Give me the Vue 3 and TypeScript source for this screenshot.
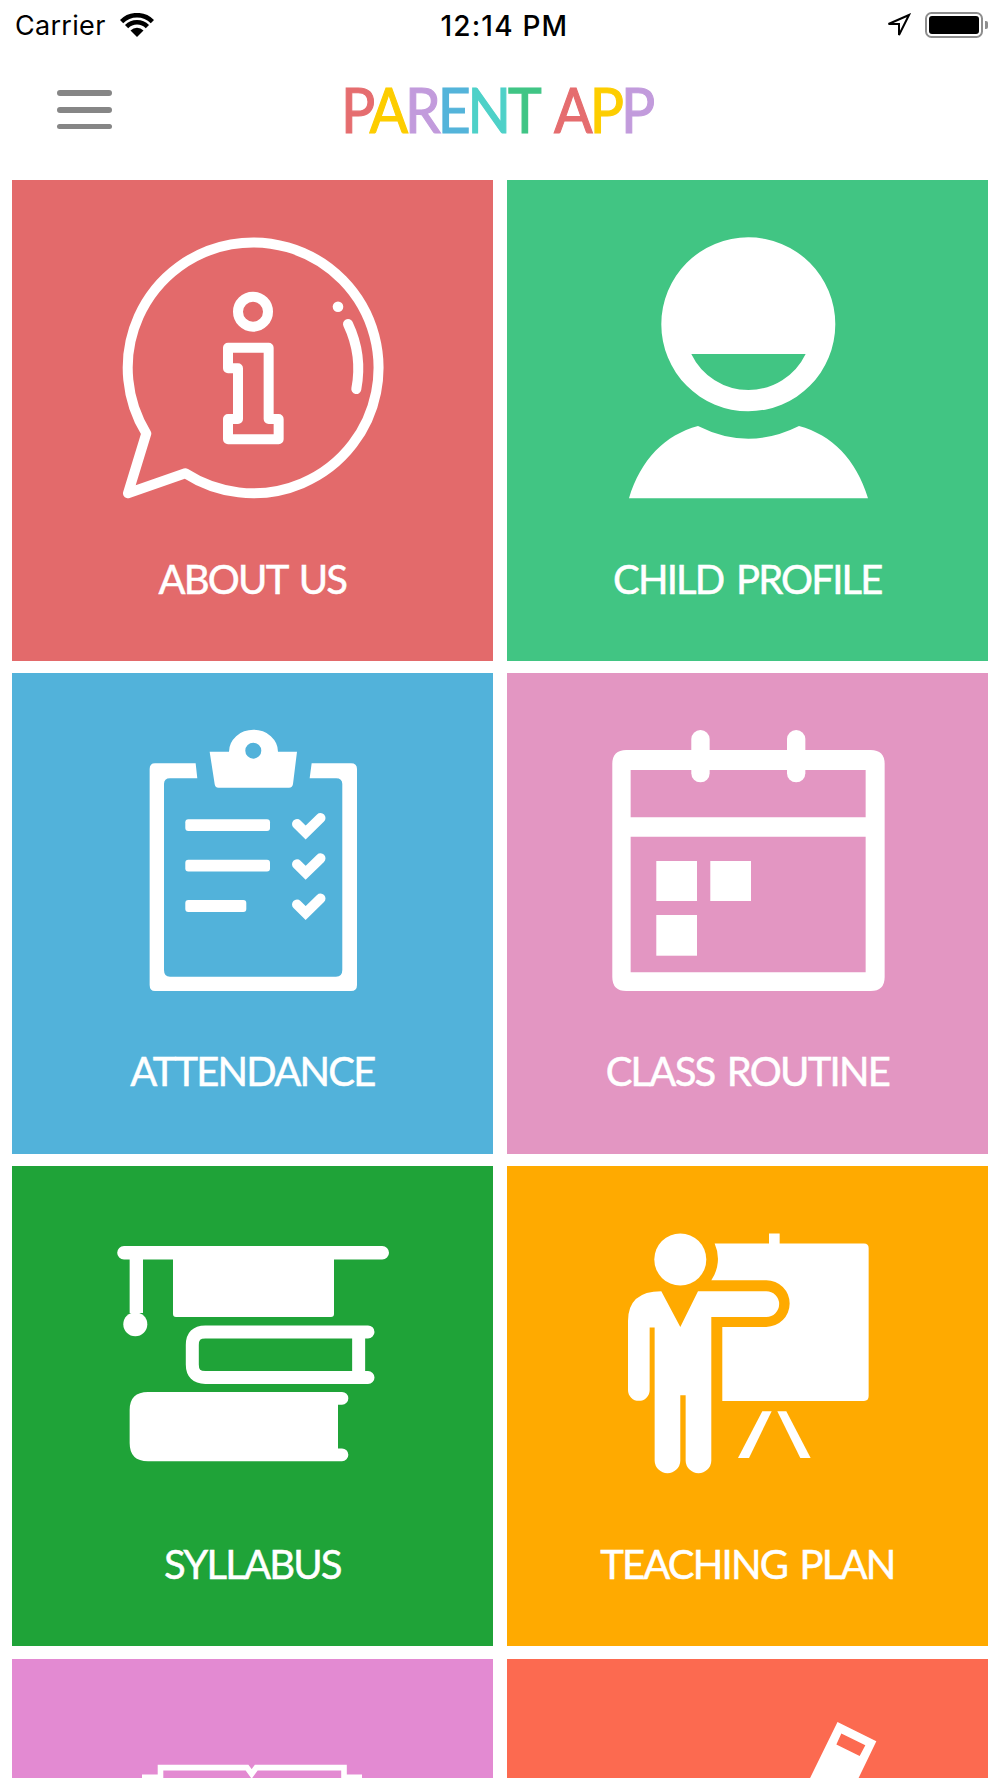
<script setup lang="ts">
const logo: { ch: string; color: string }[] = [
  { ch: 'P', color: '#e56d6f' },
  { ch: 'A', color: '#fdcd00' },
  { ch: 'R', color: '#c29bdc' },
  { ch: 'E', color: '#54b4da' },
  { ch: 'N', color: '#4ed1c8' },
  { ch: 'T', color: '#40c585' },
  { ch: '\u00a0', color: '#fff' },
  { ch: 'A', color: '#e56d6f' },
  { ch: 'P', color: '#fdcd00' },
  { ch: 'P', color: '#c29bdc' },
]
</script>

<template>
  <div class="screen">
    <header class="status">
      <div class="status-left">
        <span class="carrier">Carrier</span>
        <svg class="wifi" width="34" height="24" viewBox="0 0 34 24">
          <path d="M1.6 8.6A21.7 21.7 0 0 1 32.4 8.6" fill="none" stroke="#000" stroke-width="4.6" />
          <path d="M6.6 13.6A14.7 14.7 0 0 1 27.4 13.6" fill="none" stroke="#000" stroke-width="4.6" />
          <path d="M17 24L10.5 17.5A9.2 9.2 0 0 1 23.5 17.5Z" fill="#000" />
        </svg>
      </div>
      <span class="time">12:14 PM</span>
      <div class="status-right">
        <svg width="24" height="24" viewBox="0 0 24 24">
          <path d="M22 2L1.5 11H12V22Z" fill="none" stroke="#000" stroke-width="2" />
        </svg>
        <div class="battery"><div class="battery-fill"></div></div>
        <div class="nub"></div>
      </div>
    </header>

    <nav class="nav">
      <div class="burger"><i></i><i></i><i></i></div>
      <div class="logo">
        <span v-for="(l, i) in logo" :key="i" :style="{ color: l.color }">{{ l.ch }}</span>
      </div>
    </nav>

    <main class="grid">
      <section class="tile red">
        <svg class="icon" viewBox="0 0 300 262">
          <path d="M44.3 196.5L26 256.3L83.3 236.3A125.4 125.4 0 1 0 44.3 196.5Z" class="line" />
          <circle cx="236" cy="69.7" r="5.3" fill="#fff" />
          <path d="M246 87A105 105 0 0 1 254.3 152" class="line" />
          <circle cx="151" cy="74.7" r="15" class="line" />
          <path d="M126 110.7V131.3H136V182H126V202.3H176.65V182H166.65V110.7Z" class="line" />
        </svg>
        <h2 class="label">ABOUT US</h2>
      </section>

      <section class="tile green">
        <svg class="icon" viewBox="0 0 300 262">
          <path fill="#fff" fill-rule="evenodd" d="M64.3 87.3A87 87 0 1 1 238.3 87.3A87 87 0 1 1 64.3 87.3ZM94.3 117A63.4 63.4 0 0 0 208.65 117Z" />
          <path fill="#fff" d="M32 261.3C44 222 68 198 101 189Q151.3 214.4 202 189C235 198 259 222 271 261.3Z" />
        </svg>
        <h2 class="label">CHILD PROFILE</h2>
      </section>

      <section class="tile blue">
        <svg class="icon" viewBox="0 0 300 262">
          <path fill="#fff" d="M93.65 33.3H53Q47.65 33.3 47.65 39V255Q47.65 261 53 261H249Q255 261 255 255V39Q255 33.3 249 33.3H209.65L207.65 48.3H234Q240.3 48.3 240.3 54V240Q240.3 246.7 234 246.7H68Q62 246.7 62 240V54Q62 48.3 68 48.3H95.3Z" />
          <path fill="#fff" fill-rule="evenodd" d="M107.65 21.7H127A24.5 22 0 0 1 176 21.7H195L191 54Q190.5 57.7 187 57.7H116.5Q113 57.7 112.65 54ZM143.3 20.7A8 8 0 1 0 159.3 20.7A8 8 0 1 0 143.3 20.7Z" />
          <rect x="83.3" y="89.3" width="84.7" height="11.7" rx="3" fill="#fff" />
          <rect x="83.3" y="129.7" width="84.7" height="11.7" rx="3" fill="#fff" />
          <rect x="83.3" y="170" width="61" height="12" rx="3" fill="#fff" />
          <path d="M195 94L203.65 102.5L218.5 88" class="check" />
          <path d="M195 134.3L203.65 142.8L218.5 128.3" class="check" />
          <path d="M195 174.5L203.65 183L218.5 168.5" class="check" />
        </svg>
        <h2 class="label">ATTENDANCE</h2>
      </section>

      <section class="tile pink">
        <svg class="icon" viewBox="0 0 300 262">
          <path fill="#fff" fill-rule="evenodd" d="M29.3 20H273.65Q287.65 20 287.65 34V247Q287.65 261 273.65 261H29.3Q15.3 261 15.3 247V34Q15.3 20 29.3 20ZM33.65 40V87.3H268.65V40ZM33.65 106.7V242.3H268.65V106.7Z" />
          <rect x="94.3" y="0" width="18.35" height="52.3" rx="9.1" fill="#fff" />
          <rect x="190" y="0" width="18.35" height="52.3" rx="9.1" fill="#fff" />
          <rect x="59.3" y="131" width="40.7" height="40" fill="#fff" />
          <rect x="113.3" y="131" width="40.7" height="40" fill="#fff" />
          <rect x="59.3" y="185" width="40.7" height="40.7" fill="#fff" />
        </svg>
        <h2 class="label">CLASS ROUTINE</h2>
      </section>

      <section class="tile forest">
        <svg class="icon" viewBox="0 0 300 262">
          <path fill="#fff" d="M22 22.9H280.2A6.8 6.8 0 0 1 280.2 36.5H232V90.9Q232 93.9 229 93.9H74Q71 93.9 71 90.9V36.5H41V90H27.65V36.5H22A6.8 6.8 0 0 1 22 22.9Z" />
          <circle cx="33.3" cy="101.2" r="12" fill="#fff" />
          <path d="M266 108.9H103.3Q90.3 108.9 90.3 122V141.5Q90.3 154.5 103.3 154.5H266M256.65 108.9V154.5" fill="none" stroke="#fff" stroke-width="13" stroke-linecap="round" />
          <path fill="#fff" d="M46 169H240A6.35 6.35 0 0 1 240 181.7H236V225.5H240A6.35 6.35 0 0 1 240 238.2H46Q27.65 238.2 27.65 220V187Q27.65 169 46 169Z" />
        </svg>
        <h2 class="label">SYLLABUS</h2>
      </section>

      <section class="tile orange">
        <svg class="icon" viewBox="0 0 300 262">
          <circle cx="83.3" cy="36.5" r="26" fill="#fff" />
          <rect x="172" y="10.5" width="10.65" height="11" fill="#fff" />
          <path fill="#fff" d="M117.65 20.5A37.5 37.5 0 0 1 114.3 57.2H169.3A23.35 23.35 0 0 1 169.3 103.9H125.3V177.9H267Q271.65 177.9 271.65 173V25Q271.65 20.5 267 20.5Z" />
          <path fill="#fff" d="M64.3 68.2L83.3 103.9L101 68.2H169.3A12.85 12.85 0 0 1 169.3 93.9H114.3V237.7A12.83 12.83 0 0 1 88.65 237.7V172.2H83.3V237.7A12.83 12.83 0 0 1 57.65 237.7V104.5H52.65V167A10.8 10.8 0 0 1 31 167V98Q31 68.2 64.3 68.2Z" />
          <path fill="#fff" d="M165.3 188.2H174.65L152 234.9H141Z" />
          <path fill="#fff" d="M180.3 188.2H189.3L213.65 234.9H203.3Z" />
        </svg>
        <h2 class="label">TEACHING PLAN</h2>
      </section>

      <section class="tile orchid">
        <svg class="icon" viewBox="0 0 300 262">
          <path d="M40 61.3H58.5V51.6H145L149.65 58L154.3 51.6H242V61.3H260M58.5 61.3V200M242 61.3V200" fill="none" stroke="#fff" stroke-width="5.6" />
        </svg>
      </section>

      <section class="tile coral">
        <svg class="icon" viewBox="0 0 300 262">
          <path fill="#fff" fill-rule="evenodd" d="M240.5 6L279.35 25.3L219 150L170 150ZM244.35 17.6L239.35 28.6L262.65 40L268.35 29.3Z" />
        </svg>
      </section>
    </main>
  </div>
</template>

<style scoped>
.screen {
  width: 1000px;
  height: 1778px;
  overflow: hidden;
  background: #fff;
  font-family: "Lato", "Liberation Sans", sans-serif;
}
.status {
  display: grid;
  grid-template-columns: 1fr auto 1fr;
  align-items: center;
  height: 48px;
  padding: 0 12.3px 0 15px;
  color: #000;
  font-family: "Inter", "Liberation Sans", sans-serif;
}
.status-left {
  display: flex;
  align-items: center;
  gap: 14px;
}
.carrier {
  font-size: 27px;
  line-height: 48px;
  letter-spacing: 0.3px;
  padding-top: 2px;
}
.wifi {
  display: block;
}
.time {
  font-size: 28px;
  font-weight: 500;
  line-height: 48px;
  letter-spacing: 1.2px;
  margin-left: 6px;
  padding-top: 2px;
}
.status-right {
  display: flex;
  align-items: center;
  justify-content: flex-end;
}
.status-right svg {
  margin-right: 14px;
}
.battery {
  box-sizing: border-box;
  width: 57.4px;
  height: 26.6px;
  border: 2.4px solid #8e8e8e;
  border-radius: 6.5px;
  padding: 2px;
}
.battery-fill {
  height: 100%;
  background: #000;
  border-radius: 3px;
}
.nub {
  width: 2.7px;
  height: 8.3px;
  margin-left: 2.3px;
  background: #8e8e8e;
  border-radius: 0 2px 2px 0;
}
.nav {
  display: flex;
  align-items: flex-start;
  height: 132px;
  padding: 0 0 0 56.7px;
  box-sizing: border-box;
}
.burger {
  display: flex;
  flex-direction: column;
  gap: 11px;
  width: 55.6px;
  margin-top: 42px;
}
.burger i {
  display: block;
  height: 5.8px;
  border-radius: 3px;
  background: #868686;
}
.logo {
  margin: 30.2px 0 0 229px;
  font-size: 62px;
  line-height: 62px;
  letter-spacing: -3.3px;
  word-spacing: 8px;
  white-space: nowrap;
  transform: scaleX(0.92);
  transform-origin: left center;
  -webkit-text-stroke: 1.2px currentColor;
}
.grid {
  display: grid;
  grid-template-columns: 480.7px 480.7px;
  grid-auto-rows: 480.7px;
  column-gap: 14.3px;
  row-gap: 12.2px;
  padding-left: 12px;
}
.tile {
  display: flex;
  flex-direction: column;
  align-items: center;
  padding-top: 57px;
  box-sizing: border-box;
}
.icon {
  display: block;
  width: 300px;
  height: 262px;
  flex: none;
  overflow: visible;
}
.line {
  fill: none;
  stroke: #fff;
  stroke-width: 10;
  stroke-linecap: round;
  stroke-linejoin: round;
}
.check {
  fill: none;
  stroke: #fff;
  stroke-width: 10;
  stroke-linecap: round;
  stroke-linejoin: miter;
}
.label {
  margin: 55.5px 0 0;
  color: #fff;
  font-size: 40px;
  font-weight: 400;
  line-height: 48px;
  letter-spacing: -1.8px;
  word-spacing: 4px;
  white-space: nowrap;
  -webkit-text-stroke: 0.5px #fff;
}
.red { background: #e36a6b; }
.green { background: #41c583; }
.blue { background: #52b2da; }
.pink { background: #e396c2; }
.forest { background: #1fa338; }
.orange { background: #ffaa00; }
.orchid { background: #e38ad2; }
.coral { background: #fc6a50; }
</style>
